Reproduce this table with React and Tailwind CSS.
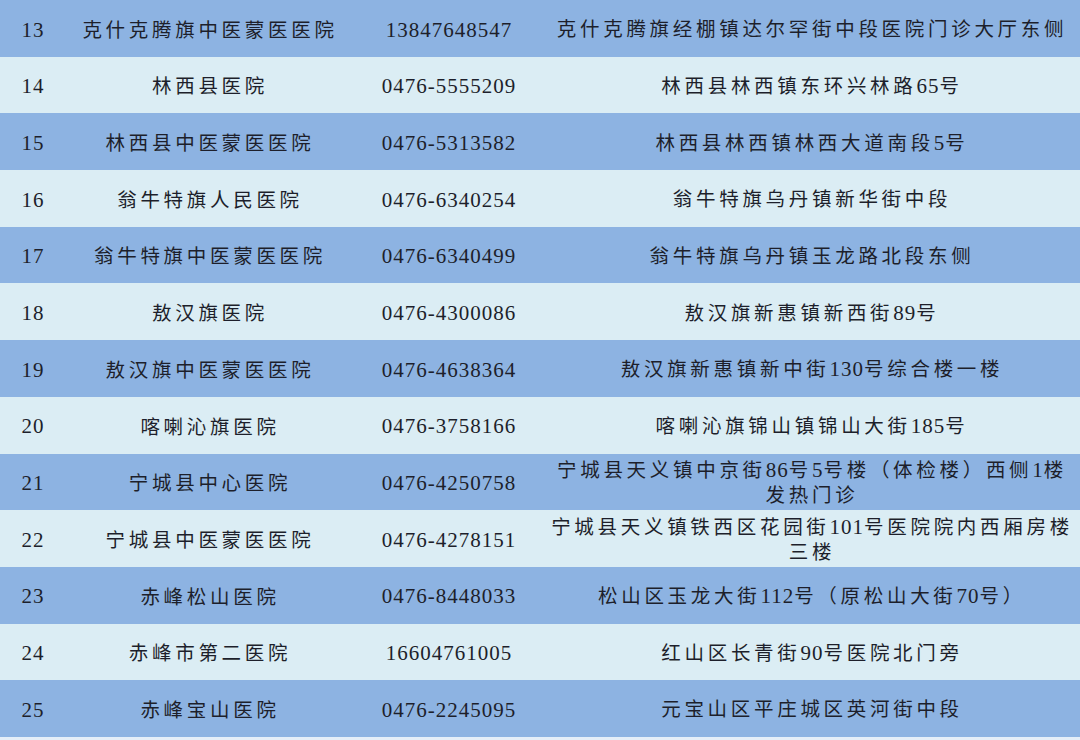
import React from "react";

const rows = [
  ["13", "克什克腾旗中医蒙医医院", "13847648547", ["克什克腾旗经棚镇达尔罕街中段医院门诊大厅东侧"]],
  ["14", "林西县医院", "0476-5555209", ["林西县林西镇东环兴林路65号"]],
  ["15", "林西县中医蒙医医院", "0476-5313582", ["林西县林西镇林西大道南段5号"]],
  ["16", "翁牛特旗人民医院", "0476-6340254", ["翁牛特旗乌丹镇新华街中段"]],
  ["17", "翁牛特旗中医蒙医医院", "0476-6340499", ["翁牛特旗乌丹镇玉龙路北段东侧"]],
  ["18", "敖汉旗医院", "0476-4300086", ["敖汉旗新惠镇新西街89号"]],
  ["19", "敖汉旗中医蒙医医院", "0476-4638364", ["敖汉旗新惠镇新中街130号综合楼一楼"]],
  ["20", "喀喇沁旗医院", "0476-3758166", ["喀喇沁旗锦山镇锦山大街185号"]],
  ["21", "宁城县中心医院", "0476-4250758", ["宁城县天义镇中京街86号5号楼（体检楼）西侧1楼", "发热门诊"]],
  ["22", "宁城县中医蒙医医院", "0476-4278151", ["宁城县天义镇铁西区花园街101号医院院内西厢房楼", "三楼"]],
  ["23", "赤峰松山医院", "0476-8448033", ["松山区玉龙大街112号（原松山大街70号）"]],
  ["24", "赤峰市第二医院", "16604761005", ["红山区长青街90号医院北门旁"]],
  ["25", "赤峰宝山医院", "0476-2245095", ["元宝山区平庄城区英河街中段"]],
];

function Run({ text }) {
  const parts = text.split(/([0-9\-]+)/).filter((p) => p.length > 0);
  return (
    <>
      {parts.map((p, i) =>
        /^[0-9\-]+$/.test(p) ? (
          <span key={i} className="text-[21px] tracking-[1px]">
            {p}
          </span>
        ) : (
          <span key={i} className="text-[19.5px] tracking-[3.7px]">
            {p}
          </span>
        )
      )}
    </>
  );
}

export default function App() {
  return (
    <div
      className="w-[1080px] h-[740px] overflow-hidden bg-[#e4eef8] text-[#1d1f2b]"
      style={{ fontFamily: '"Liberation Serif", "Noto Sans CJK SC", serif' }}
    >
      {rows.map((r, idx) => (
        <div
          key={r[0]}
          className={
            "grid grid-cols-[66px_288px_190px_536px] h-[56.7px] pt-[4px] items-center " +
            (idx % 2 === 0 ? "bg-[#8db3e2]" : "bg-[#dbedf4]")
          }
        >
          <div className="text-center">
            <Run text={r[0]} />
          </div>
          <div className="text-center">
            <Run text={r[1]} />
          </div>
          <div className="text-center">
            <Run text={r[2]} />
          </div>
          <div className="flex flex-col items-center leading-[24px]">
            {r[3].map((line, i) => (
              <div key={i} className="whitespace-nowrap">
                <Run text={line} />
              </div>
            ))}
          </div>
        </div>
      ))}
    </div>
  );
}
